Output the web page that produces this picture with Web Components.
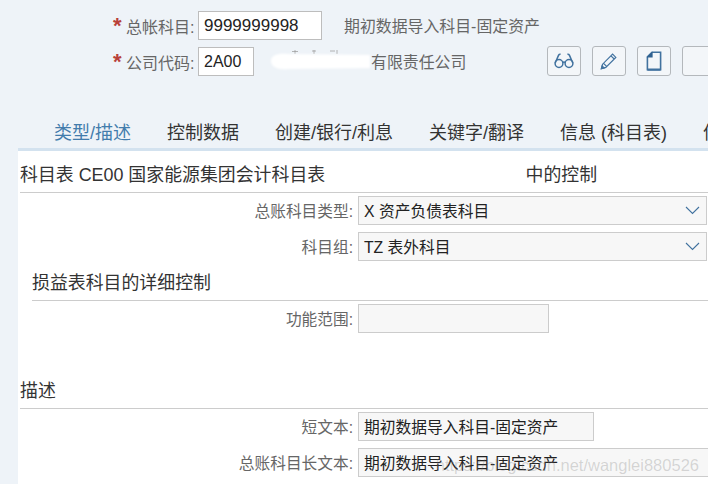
<!DOCTYPE html>
<html lang="zh">
<head>
<meta charset="utf-8">
<style>
  html, body { margin: 0; height: 100%; overflow: hidden; }
  body {
    background: #eef3f8;
    font-family: "Liberation Sans", "Noto Sans CJK SC", sans-serif;
    position: relative;
  }
</style>
</head>
<body>
<gl-header>
  <gl-key-row label="总帐科目:" value="9999999998" width="124" size="17" desc="期初数据导入科目-固定资产"></gl-key-row>
  <gl-key-row label="公司代码:" value="2A00" width="56" size="16" desc="有限责任公司" gap="117">
    <gl-icon-btn icon="glasses"></gl-icon-btn>
    <gl-icon-btn icon="pencil"></gl-icon-btn>
    <gl-icon-btn icon="page"></gl-icon-btn>
    <gl-icon-btn></gl-icon-btn>
  </gl-key-row>
</gl-header>
<gl-tabs>
  <gl-tab active>类型/描述</gl-tab>
  <gl-tab>控制数据</gl-tab>
  <gl-tab>创建/银行/利息</gl-tab>
  <gl-tab>关键字/翻译</gl-tab>
  <gl-tab>信息 (科目表)</gl-tab>
  <gl-tab>信息 (公司代码)</gl-tab>
</gl-tabs>
<gl-panel>
  <gl-title aside="中的控制" height="42">科目表 CE00 国家能源集团会计科目表</gl-title>
  <gl-row label="总账科目类型:" value="X 资产负债表科目" select></gl-row>
  <gl-row label="科目组:" value="TZ 表外科目" select></gl-row>
  <gl-title indent="12" height="36">损益表科目的详细控制</gl-title>
  <gl-row label="功能范围:" width="191"></gl-row>
  <gl-title height="72">描述</gl-title>
  <gl-row label="短文本:" value="期初数据导入科目-固定资产" width="236"></gl-row>
  <gl-row label="总账科目长文本:" value="期初数据导入科目-固定资产" width="360"></gl-row>
</gl-panel>
<gl-smudge></gl-smudge>
<gl-watermark>https://blog.csdn.net/wanglei880526</gl-watermark>

<script>
const ICONS = {
  glasses: `<svg width="20" height="18" viewBox="0 0 20 18" fill="none" stroke="#41729f" stroke-width="1.5">
    <circle cx="5" cy="11.5" r="3.9"/><circle cx="15" cy="11.5" r="3.9"/>
    <path d="M8.6 10.4q1.4-1 2.8 0M1.2 11 4.6 3.2q.6-1.1 2-.9M18.8 11 15.4 3.2q-.6-1.1-2-.9"/></svg>`,
  pencil: `<svg width="18" height="18" viewBox="0 0 18 18" fill="none" stroke="#41729f" stroke-width="1.2">
    <path d="M1.4 16.6 2.6 12.2 12.6 2.2 15.8 5.4 5.8 15.4Z M3.6 11.4 6.6 14.4 M11 3.8 14.2 7"/>
    <path d="M1.4 16.6 2.1 13.9 4.1 15.9Z" fill="#41729f"/></svg>`,
  page: `<svg width="16" height="20" viewBox="0 0 16 20" fill="none" stroke="#41729f" stroke-width="1.6">
    <path d="M6 1.2H14.6V18.8H1.4V5.8Z"/><path d="M6.6 .5V6.4H.7Z" fill="#2f6190" stroke="none"/>
    <path d="M1.4 18.6H14.6" stroke-width="2.2"/></svg>`
};

function def(name, css, html) {
  customElements.define(name, class extends HTMLElement {
    constructor() {
      super();
      this.attachShadow({ mode: 'open' });
    }
    connectedCallback() {
      this.shadowRoot.innerHTML = `<style>${css}</style>` + html(this);
    }
  });
}

def('gl-header', `
  :host { display: flex; flex-direction: column; gap: 7px; height: 102px; padding: 11px 0 0 113px; box-sizing: border-box; }
`, () => `<slot></slot>`);

def('gl-key-row', `
  :host { display: flex; align-items: center; height: 29px; font-size: 16px; color: #666; white-space: nowrap; }
  span { flex: none; }
  .star { color: #b8403a; font-size: 22px; width: 13px; font-weight: bold; line-height: 20px; position: relative; top: 0; }
  .lab { width: 67px; margin-right: 5px; }
  .val { box-sizing: border-box; height: 29px; border: 1px solid #bdbdbd; background: #fff; color: #222;
         line-height: 27px; padding-left: 5px; }
  .desc { font-size: 15.9px; }
  .btns { display: flex; gap: 11px; margin-left: 81px; margin-top: -1px; }
`, el => {
  const w = el.getAttribute('width');
  const gap = el.getAttribute('gap') || 22;
  return `<span class="star">*</span><span class="lab">${el.getAttribute('label')}</span>
    <span class="val" style="width:${w}px;font-size:${el.getAttribute('size')}px">${el.getAttribute('value')}</span>
    <span class="desc" style="margin-left:${gap}px">${el.getAttribute('desc')}</span>
    ${el.children.length ? '<span class="btns"><slot></slot></span>' : ''}`;
});

def('gl-icon-btn', `
  :host { display: flex; box-sizing: border-box; width: 34px; height: 30px; border: 1px solid #b4b8bc; border-radius: 3px;
          background: #f3f6f9; align-items: center; justify-content: center; flex: none; }
  svg { display: block; }
`, el => ICONS[el.getAttribute('icon')] || '');

def('gl-tabs', `
  :host { display: flex; gap: 36px; height: 49px; box-sizing: border-box; margin-left: 18px; padding-left: 36px;
          border-bottom: 3px solid #d3e2ef; white-space: nowrap; overflow: hidden; }
`, () => `<slot></slot>`);

def('gl-tab', `
  :host { display: block; height: 49px; box-sizing: border-box; padding-top: 18px; font-size: 18px; line-height: 27px; color: #333; flex: none; }
  :host([active]) { color: #427cac; border-bottom: 3px solid #3f7099; }
`, () => `<slot></slot>`);

def('gl-panel', `
  :host { display: block; margin-left: 18px; background: #fff; height: 333px; padding-left: 2px; overflow: hidden; }
`, () => `<slot></slot>`);

def('gl-title', `
  :host { display: flex; align-items: flex-end; box-sizing: border-box; border-bottom: 1px solid #ccc; font-size: 17.9px; color: #333;
          padding-bottom: 6px; white-space: nowrap; }
  .main { flex: none; width: 505.5px; }
`, el => {
  const indent = +el.getAttribute('indent') || 0;
  el.style.height = el.getAttribute('height') + 'px';
  el.style.marginLeft = indent + 'px';
  const aside = el.getAttribute('aside');
  return `<span class="main"><slot></slot></span>${aside ? `<span>${aside}</span>` : ''}`;
});

def('gl-row', `
  :host { display: flex; align-items: center; height: 36px; box-sizing: border-box; padding: 3px 0 4px; white-space: nowrap; }
  .lab { width: 333px; text-align: right; margin-right: 5px; font-size: 15.7px; color: #666; flex: none; }
  .box { display: flex; align-items: center; justify-content: space-between; box-sizing: border-box; height: 29px; flex: none;
         border: 1px solid #ccc; background: #f7f7f7; color: #222; font-size: 15.75px; padding: 0 5px; }
  svg { display: block; margin-right: 1px; }
`, el => {
  const w = el.getAttribute('width') || 349;
  const chevron = el.hasAttribute('select')
    ? `<svg width="15" height="9" viewBox="0 0 15 9" fill="none" stroke="#41729f" stroke-width="1.1"><path d="M1 1 7.5 7.5 14 1"/></svg>` : '';
  return `<span class="lab">${el.getAttribute('label')}</span>
    <span class="box" style="width:${w}px"><span>${el.getAttribute('value') || ''}</span>${chevron}</span>`;
});

// white brush mark over the blanked-out company name, tops of the hidden glyphs stick out above it
def('gl-smudge', `
  :host { position: absolute; left: 268px; top: 48px; width: 106px; height: 24px; }
  svg { display: block; }
`, () => `<svg width="106" height="24" viewBox="0 0 106 24">
    <path d="M24 3.5h6M27 2v4M44 3h4M46 2v4M62 3h5M69 2v4" stroke="#999" stroke-width="1" fill="none" opacity=".7"/>
    <path d="M3 13C3 7 10 5 20 6L102 7V20L20 21C10 22 3 19 3 13Z" fill="#fff" style="filter:blur(1.2px)"/>
  </svg>`);

def('gl-watermark', `
  :host { position: absolute; right: 9px; top: 456px; font-size: 16.5px; color: rgba(120,120,120,.28); white-space: nowrap; }
`, () => `<slot></slot>`);
</script>
</body>
</html>
